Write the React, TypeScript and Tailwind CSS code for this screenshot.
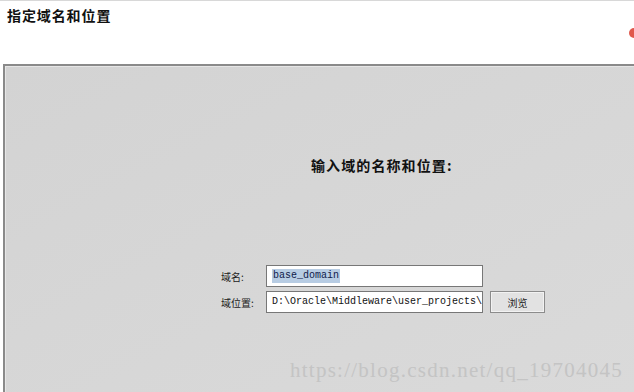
import React from 'react';

const cjk = { fontFamily: '"Noto Sans CJK SC", "Noto Sans", sans-serif' };
const mono = { fontFamily: '"Liberation Mono", "DejaVu Sans Mono", monospace' };

const App: React.FC = () => {
  return (
    <div className="relative w-[634px] h-[392px] overflow-hidden bg-white" style={cjk}>
      {/* header */}
      <div className="h-[64px] border-t border-[#d8d8d8] bg-white pl-[7px] pt-[4px]">
        <h1 className="text-[14px] leading-[20px] font-bold text-[#111] tracking-[0.9px]">指定域名和位置</h1>
      </div>

      {/* panel */}
      <div className="ml-[3px] h-[328px] border-t-2 border-l-2 border-[#8a8a8a] bg-gradient-to-br from-[#d3d3d3] to-[#dadada]">
        <div className="border-t border-l border-[#e6e6e6] h-full pt-[88px]">
          <h2 className="ml-[305px] text-[14px] leading-[20px] font-bold text-[#111] tracking-[1.1px]">输入域的名称和位置:</h2>

          <div className="mt-[90px] ml-[215px] flex flex-col gap-[4px]">
            <div className="flex items-center">
              <span className="w-[45px] text-[10px] text-[#222]">域名:</span>
              <div className="w-[217px] h-[22px] border border-[#777] bg-white flex items-center pl-[5px]">
                <span className="text-[10px] leading-[14px] bg-[#b7cce3] text-[#10204a] px-[1px]" style={mono}>base_domain</span>
              </div>
            </div>
            <div className="flex items-center">
              <span className="w-[45px] text-[10px] text-[#222]">域位置:</span>
              <div className="w-[217px] h-[22px] border border-[#777] bg-white flex items-center pl-[5px] overflow-hidden whitespace-nowrap">
                <span className="text-[10px] leading-[14px] text-[#111]" style={mono}>D:\Oracle\Middleware\user_projects\</span>
              </div>
              <button className="ml-[7px] w-[55px] h-[22px] border border-[#8c8c8c] bg-[#e2e2e2] text-[10px] text-[#222] shadow-[inset_0_0_0_1px_#f2f2f2]">浏览</button>
            </div>
          </div>
        </div>
      </div>

      {/* red indicator at right edge */}
      <div className="absolute left-[629px] top-[28px] w-[10px] h-[10px] rounded-full bg-[#e0584c]" />

      {/* watermark */}
      <div
        className="absolute left-[290px] top-[357px] text-[21px] leading-[26px] text-[#c4c4c4] tracking-[1.25px]"
        style={{ fontFamily: '"Liberation Serif", "DejaVu Serif", serif' }}
      >
        https://blog.csdn.net/qq_19704045
      </div>
    </div>
  );
};

export default App;
